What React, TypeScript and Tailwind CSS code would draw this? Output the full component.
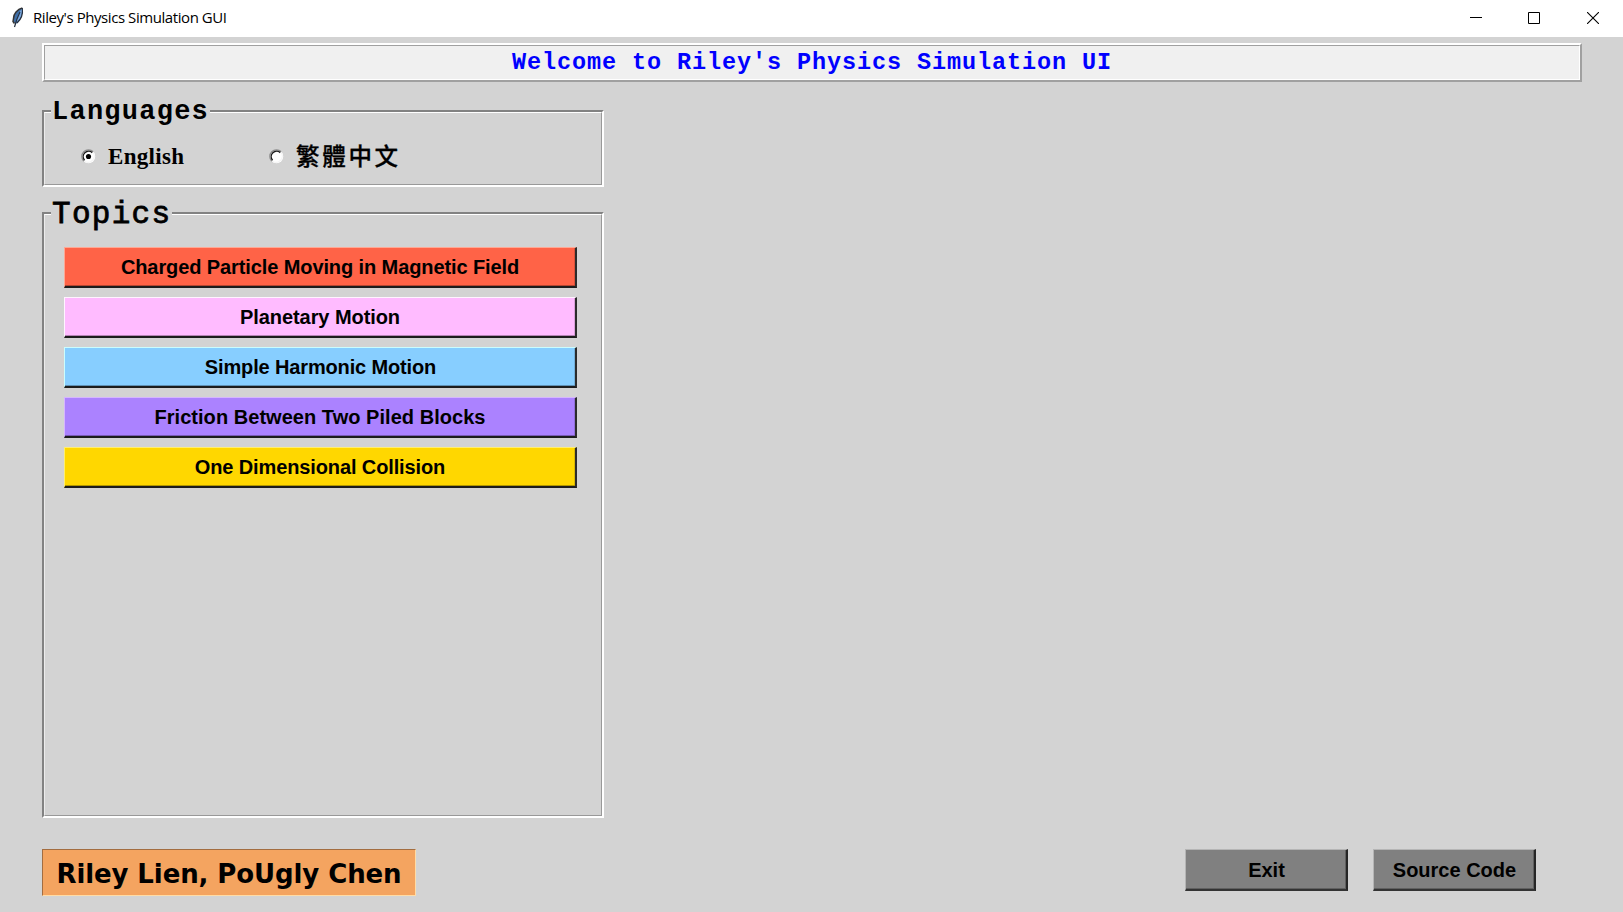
import { useState, type ReactNode } from "react";

type Topic = { label: string; look: string; tracking: string };

const topics: Topic[] = [
  { label: "Charged Particle Moving in Magnetic Field", look: "bg-[#ff6347] border-t-[#ffa894] border-l-[#ffa894] shadow-[inset_0_-1px_0_#b34631,inset_-1px_0_0_#d9523a]", tracking: "tracking-[-0.1px]" },
  { label: "Planetary Motion", look: "bg-[#ffbbff] border-t-[#fff4ff] border-l-[#fff4ff] shadow-[inset_0_-1px_0_#b383b3,inset_-1px_0_0_#d99fd9]", tracking: "tracking-[-0.07px]" },
  { label: "Simple Harmonic Motion", look: "bg-[#87ceff] border-t-[#cbfdff] border-l-[#cbfdff] shadow-[inset_0_-1px_0_#5f90b3,inset_-1px_0_0_#73afd9] pl-px", tracking: "tracking-[-0.14px]" },
  { label: "Friction Between Two Piled Blocks", look: "bg-[#ab82ff] border-t-[#d6b6ff] border-l-[#d6b6ff] shadow-[inset_0_-1px_0_#785bb3,inset_-1px_0_0_#916fd9]", tracking: "tracking-[0.04px]" },
  { label: "One Dimensional Collision", look: "bg-[#ffd700] border-t-[#ffee70] border-l-[#ffee70] shadow-[inset_0_-1px_0_#b39700,inset_-1px_0_0_#d9b700]", tracking: "tracking-[-0.12px]" },
];

const sans = "font-['Liberation_Sans',sans-serif]";
const mono = "font-['Liberation_Mono',monospace]";

function Feather() {
  return (
    <svg width="14" height="22" viewBox="0 0 14 22">
      <path d="M11.3 1C7 2 2.6 6.500 2.600 11.500L2.200 15 5.600 16.500C9.500 13.500 12 7.500 11.300 1Z" fill="#3f6fa8" />
      <path d="M11.300 1C8 5 6.500 10 5 15.800C9.500 13 12 7.500 11.300 1Z" fill="#79a7df" />
      <path d="M11.300 1C6.500 2 2.300 7 2.500 11.500L2 14.500 3.500 16.500" fill="none" stroke="#333" strokeWidth="1.500" />
      <path d="M11.300 1C12 6 10.500 12 6 16M9 5C7 9 5 14 3.500 20" fill="none" stroke="#25303f" strokeWidth="1.200" />
    </svg>
  );
}

function Groove({ title, titleStyle, className, children }: { title: string; titleStyle: string; className: string; children: ReactNode }) {
  return (
    <section className={`relative w-[562px] border-2 border-t-[#828282] border-l-[#828282] border-r-white border-b-white ${className}`}>
      <div className="h-full border border-t-white border-l-[#ececec] border-r-[#999] border-b-[#999]">{children}</div>
      <h2 className={`absolute left-[7px] bg-[#d3d3d3] pr-px pl-px leading-none ${mono} ${titleStyle}`}>{title}</h2>
    </section>
  );
}

function Radio({ checked }: { checked: boolean }) {
  return (
    <svg width="15" height="15" viewBox="0 0 14 14">
      <circle cx="7" cy="7" r="6.300" fill="#fff" />
      <path d="M2.600 11.400A6.200 6.200 0 0 1 11.400 2.600" fill="none" stroke="#8a8a8a" strokeWidth="1.200" />
      <path d="M3.400 10.600A5.100 5.100 0 0 1 10.600 3.400" fill="none" stroke="#1c1c1c" strokeWidth="1.300" />
      <path d="M11.200 2.800A6 6 0 0 1 2.800 11.200" fill="none" stroke="#f5f5f5" strokeWidth="1.200" />
      {checked && <circle cx="7" cy="7" r="2.400" fill="#000" />}
    </svg>
  );
}

export default function App() {
  const [language, setLanguage] = useState("en");
  return (
    <div className="flex h-[912px] w-[1623px] flex-col overflow-hidden bg-[#d3d3d3] text-black">
      <header className="flex h-[37px] shrink-0 items-center bg-white pb-px pl-[11px]">
        <Feather />
        <span className="ml-2 whitespace-nowrap pb-px font-['Open_Sans',sans-serif] text-[15px] tracking-[-0.43px]">Riley's Physics Simulation GUI</span>
        <div className="ml-auto flex items-center gap-[46px] pr-[24px]">
          <svg width="12" height="12"><path d="M0 5.500H12" stroke="#000" /></svg>
          <svg width="12" height="12" className="mr-px"><path d="M.5.5h11v11H.5z" fill="none" stroke="#000" /></svg>
          <svg width="12" height="12"><path d="M0 0 12 12M12 0 0 12" stroke="#000" strokeWidth="1.100" /></svg>
        </div>
      </header>

      <div className="mt-[6px] ml-[42px] h-[39px] w-[1540px] shrink-0 border-2 border-t-white border-l-white border-r-[#a0a0a0] border-b-[#a0a0a0]">
        <div className="flex h-full items-center justify-center border border-t-[#a0a0a0] border-l-[#a0a0a0] border-r-white border-b-white bg-[#f0f0f0]">
          <h1 className={`pt-px text-[23.5px] leading-none font-bold tracking-[0.9px] text-[#0000ff] ${mono}`}>Welcome to Riley's Physics Simulation UI</h1>
        </div>
      </div>

      <main className="ml-[42px] flex flex-col">
        <Groove title="Languages" titleStyle="top-[-13px] text-[27px] tracking-[1.25px] font-bold" className="mt-[28px] h-[77px]">
          <div className="flex h-full items-center pt-[15px] pl-[36px]">
            <button onClick={() => setLanguage("en")} className="flex w-[188px] items-center gap-[12px]">
              <Radio checked={language === "en"} />
              <span className="font-['Liberation_Serif',serif] text-[23px] leading-none font-bold tracking-[0.3px]">English</span>
            </button>
            <button onClick={() => setLanguage("zh")} className="flex items-center gap-[12px]">
              <Radio checked={language === "zh"} />
              <span className="font-['Noto_Sans_CJK_TC',sans-serif] text-[23.5px] leading-none font-medium tracking-[2.700px] [-webkit-text-stroke:0.300px_black]">繁體中文</span>
            </button>
          </div>
        </Groove>

        <Groove title="Topics" titleStyle="top-[-15px] text-[31px] tracking-[1.300px] [-webkit-text-stroke:0.800px_black]" className="mt-[25px] h-[606px]">
          <div className="flex flex-col gap-[9px] pt-[32px] pl-[19px]">
            {topics.map((t) => (
              <button
                key={t.label}
                className={`h-[41px] w-[513px] border border-r-2 border-b-2 border-r-[#2b2b2b] border-b-[#1c1c1c] text-[20px] leading-none font-bold ${sans} ${t.look} ${t.tracking}`}
              >
                {t.label}
              </button>
            ))}
          </div>
        </Groove>
      </main>

      <footer className="mt-[31px] ml-[42px] flex items-start">
        <div className="flex h-[47px] w-[374px] items-center justify-center border border-t-[#a36d40] border-l-[#a36d40] border-r-[#ffdca6] border-b-[#ffdca6] bg-[#f4a460] pt-[2px] font-['DejaVu_Sans',sans-serif] text-[26px] leading-none font-bold tracking-[-0.100px] whitespace-nowrap">
          Riley Lien, PoUgly Chen
        </div>
        <div className={`ml-auto flex gap-[25px] pr-[87px] text-[20px] leading-none font-bold ${sans}`}>
          {["Exit", "Source Code"].map((t) => (
            <button key={t} className="h-[42px] w-[163px] border border-r-2 border-b-2 border-t-[#b5b5b5] border-l-[#b5b5b5] border-r-[#262626] border-b-[#333] bg-[#808080] pl-px shadow-[inset_-1px_-1px_0_#606060]">
              {t}
            </button>
          ))}
        </div>
      </footer>
    </div>
  );
}
